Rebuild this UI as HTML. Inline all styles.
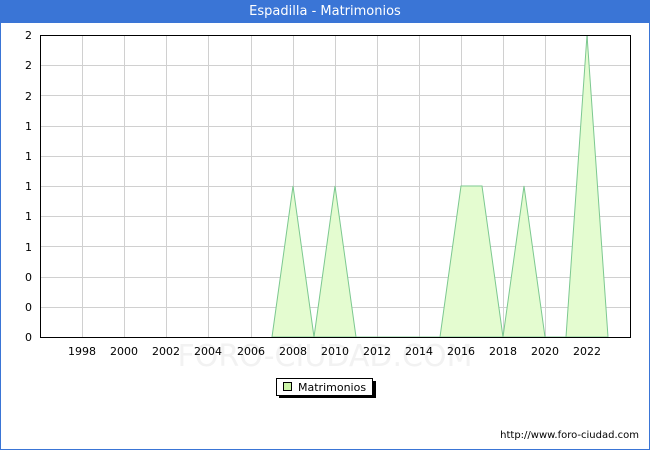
<!DOCTYPE html>
<html><head><style>
body{margin:0;width:650px;height:450px;overflow:hidden;background:#fff;font-family:"DejaVu Sans","Liberation Sans",sans-serif;}
.frame{position:absolute;left:0;top:0;width:648px;height:448px;border:1px solid #3a75d6;}
.title{position:absolute;left:0;top:0;width:650px;height:23px;background:#3a75d6;color:#fff;font-size:13px;text-align:center;line-height:23px;}
svg{position:absolute;left:0;top:0}
</style></head><body>
<div class="frame"></div>
<div class="title">Espadilla - Matrimonios</div>
<svg width="650" height="450" font-family="DejaVu Sans, Liberation Sans, sans-serif" font-size="11">
<g stroke="#d0d0d0" stroke-width="1">
<line x1="40" x2="630" y1="65.5" y2="65.5"/><line x1="40" x2="630" y1="95.5" y2="95.5"/>
<line x1="40" x2="630" y1="126.5" y2="126.5"/><line x1="40" x2="630" y1="156.5" y2="156.5"/>
<line x1="40" x2="630" y1="186.5" y2="186.5"/><line x1="40" x2="630" y1="216.5" y2="216.5"/>
<line x1="40" x2="630" y1="246.5" y2="246.5"/><line x1="40" x2="630" y1="277.5" y2="277.5"/>
<line x1="40" x2="630" y1="307.5" y2="307.5"/>
<line x1="82.5" x2="82.5" y1="35" y2="337"/><line x1="124.5" x2="124.5" y1="35" y2="337"/>
<line x1="166.5" x2="166.5" y1="35" y2="337"/><line x1="208.5" x2="208.5" y1="35" y2="337"/>
<line x1="251.5" x2="251.5" y1="35" y2="337"/><line x1="293.5" x2="293.5" y1="35" y2="337"/>
<line x1="335.5" x2="335.5" y1="35" y2="337"/><line x1="377.5" x2="377.5" y1="35" y2="337"/>
<line x1="419.5" x2="419.5" y1="35" y2="337"/><line x1="461.5" x2="461.5" y1="35" y2="337"/>
<line x1="503.5" x2="503.5" y1="35" y2="337"/><line x1="545.5" x2="545.5" y1="35" y2="337"/>
<line x1="587.5" x2="587.5" y1="35" y2="337"/>
</g>
<text x="325" y="366" font-size="30" fill="#f2f2f2" text-anchor="middle">FORO-CIUDAD.COM</text>
<polygon fill="#e4fcd0" stroke="#7cc890" stroke-width="1" points="272,337 293,186 314,337 335,186 356,337 356,337 440,337 461,186 482,186 503,337 524,186 545,337 566,337 587,35 608,337"/>
<rect x="40.5" y="35.5" width="590" height="302" fill="none" stroke="#000"/>
<g fill="#000" text-anchor="end">
<text x="32" y="39">2</text><text x="32" y="69">2</text><text x="32" y="100">2</text>
<text x="32" y="130">1</text><text x="32" y="160">1</text><text x="32" y="190">1</text>
<text x="32" y="220">1</text><text x="32" y="251">1</text><text x="32" y="281">0</text>
<text x="32" y="311">0</text><text x="32" y="341">0</text>
</g>
<g fill="#000" text-anchor="middle">
<text x="82" y="355">1998</text><text x="124" y="355">2000</text><text x="166" y="355">2002</text>
<text x="208" y="355">2004</text><text x="251" y="355">2006</text><text x="293" y="355">2008</text>
<text x="335" y="355">2010</text><text x="377" y="355">2012</text><text x="419" y="355">2014</text>
<text x="461" y="355">2016</text><text x="503" y="355">2018</text><text x="545" y="355">2020</text>
<text x="587" y="355">2022</text>
</g>
<rect x="279" y="381" width="97" height="17" fill="#000"/>
<rect x="276.5" y="378.5" width="96" height="17" fill="#fff" stroke="#000"/>
<rect x="283.5" y="382.5" width="8" height="8" fill="#ccf5a8" stroke="#000"/>
<text x="298" y="391">Matrimonios</text>
<text x="639" y="438" font-size="10" text-anchor="end">http://www.foro-ciudad.com</text>
</svg>
</body></html>
